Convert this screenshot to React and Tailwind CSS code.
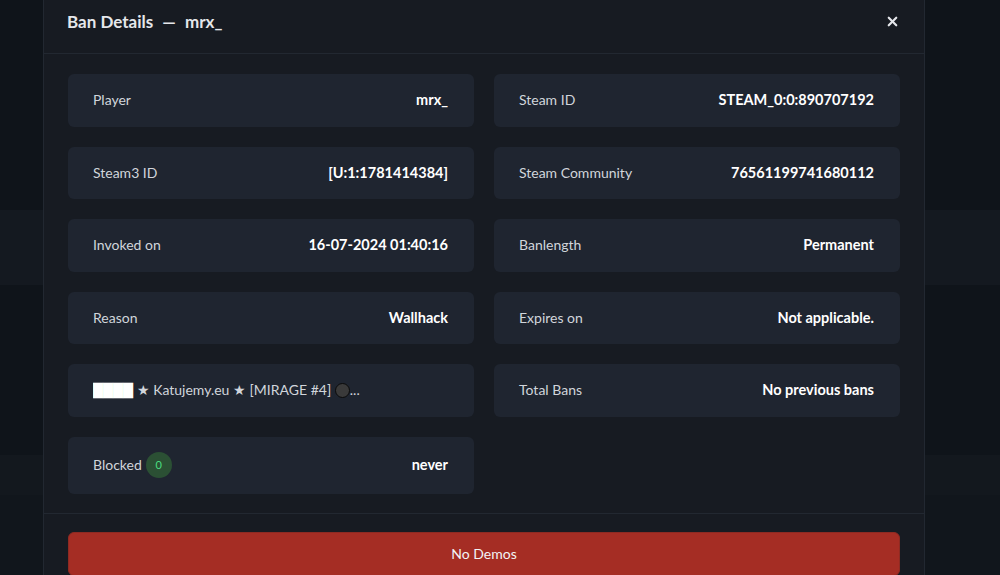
import React from "react";
import { X } from "lucide-react";

const rows = [
  [
    { label: "Player", value: "mrx_" },
    { label: "Steam ID", value: "STEAM_0:0:890707192" },
  ],
  [
    { label: "Steam3 ID", value: "[U:1:1781414384]" },
    { label: "Steam Community", value: "76561199741680112" },
  ],
  [
    { label: "Invoked on", value: "16-07-2024 01:40:16" },
    { label: "Banlength", value: "Permanent" },
  ],
  [
    { label: "Reason", value: "Wallhack" },
    { label: "Expires on", value: "Not applicable." },
  ],
];

function Card({ children, tall }) {
  return (
    <div
      className={
        "flex items-center justify-between rounded-md bg-[#1f2530] pl-[25px] pr-[26px] text-[14px] leading-[20px] " +
        (tall ? "h-[57px]" : "h-[52.5px]")
      }
    >
      {children}
    </div>
  );
}

function Backdrop() {
  return (
    <div className="flex h-full flex-col">
      <div className="h-[210px] bg-[#0f141a]" />
      <div className="h-[75px] bg-[#141920]" />
      <div className="h-[170px] bg-[#0f141a]" />
      <div className="h-[40px] bg-[#13181e]" />
      <div className="flex-1 bg-[#11161c]" />
    </div>
  );
}

export default function App() {
  return (
    <div
      className="flex h-[575px] w-[1000px] overflow-hidden bg-[#0f141a] text-white"
      style={{ fontFamily: "Lato, 'Noto Sans', sans-serif" }}
    >
      <div className="w-[43px] shrink-0">
        <Backdrop />
      </div>

      <div className="flex w-[882px] shrink-0 flex-col border-x border-[#222831] bg-[#171b22]">
        <div className="flex h-[54px] shrink-0 items-center justify-between border-b border-[#222831] pl-[23px] pr-[24px] pb-[10px]">
          <h2 className="text-[17px] font-bold text-[#e5e7eb]">
            Ban Details <span className="mx-[5px]">—</span> mrx_
          </h2>
          <X size={15} strokeWidth={3.5} className="text-[#e5e7eb]" />
        </div>

        <div className="flex flex-col gap-[20px] px-[24px] pt-[20px] pb-[19px]">
          {rows.map((pair, i) => (
            <div key={i} className="grid grid-cols-2 gap-[20px]">
              {pair.map((c) => (
                <Card key={c.label}>
                  <span className="text-[#d1d5db]">{c.label}</span>
                  <span className="text-[14.5px] font-bold text-white">{c.value}</span>
                </Card>
              ))}
            </div>
          ))}

          <div className="grid grid-cols-2 gap-[20px]">
            <Card>
              <span className="truncate text-[#d1d5db]">
                <span className="text-[13px] text-white" style={{ fontFamily: "'DejaVu Sans', sans-serif" }}>
                  ████
                </span>{" "}
                ★ Katujemy.eu ★ [MIRAGE #4]{" "}
                <span className="inline-block h-[15px] w-[15px] translate-y-[3px] rounded-full border border-[#0a0a0a] bg-[#3a3a3a]" />
                ...
              </span>
            </Card>
            <Card>
              <span className="text-[#d1d5db]">Total Bans</span>
              <span className="text-[14.5px] font-bold text-white">No previous bans</span>
            </Card>
          </div>

          <div className="grid grid-cols-2 gap-[20px]">
            <Card tall>
              <span className="flex items-center gap-[4px] text-[#d1d5db]">
                Blocked
                <span className="flex h-[26px] w-[26px] items-center justify-center rounded-full bg-[#2b5034] text-[11px] text-[#4ade80]">
                  0
                </span>
              </span>
              <span className="text-[14.5px] font-bold text-white">never</span>
            </Card>
          </div>
        </div>

        <div className="border-t border-[#222831] px-[24px] pt-[18px]">
          <button className="flex h-[44px] w-full items-center justify-center rounded-md border border-[#8e2a22] bg-[#a52d24] text-[14px] text-[#f3f4f6]">
            No Demos
          </button>
        </div>
      </div>

      <div className="flex-1">
        <Backdrop />
      </div>
    </div>
  );
}
